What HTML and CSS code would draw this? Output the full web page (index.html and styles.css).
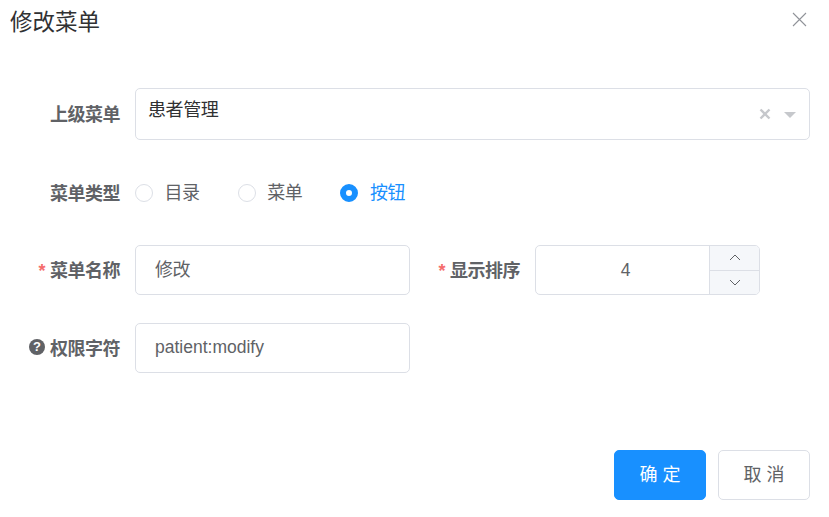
FILE: index.html
```html
<!DOCTYPE html>
<html lang="zh-CN">
<head>
<meta charset="utf-8">
<title>修改菜单</title>
<link rel="stylesheet" href="styles.css">
</head>
<body>
<div class="dialog">
  <header class="head">
    <h2 class="title">修改菜单</h2>
    <svg class="close" width="15" height="15" viewBox="0 0 15 15"><path d="M1 1L14 14M14 1L1 14" stroke="#909399" stroke-width="1.1" fill="none"/></svg>
  </header>
  <form class="form">
    <div class="row row-select">
      <label class="label">上级菜单</label>
      <div class="select">
        <span class="select-value">患者管理</span>
        <svg class="clear" width="12" height="12" viewBox="0 0 12 12"><path d="M1.5 1.5L10.5 10.5M10.5 1.5L1.5 10.5" stroke="#c6c8cc" stroke-width="2.4" fill="none"/></svg>
        <svg class="caret" width="12" height="6" viewBox="0 0 12 6"><path d="M0 0H12L6 6Z" fill="#c6c8cc"/></svg>
      </div>
    </div>
    <div class="row row-radio">
      <label class="label">菜单类型</label>
      <div class="radios">
        <span class="radio"><i class="dot"></i>目录</span>
        <span class="radio"><i class="dot"></i>菜单</span>
        <span class="radio on"><i class="dot"></i>按钮</span>
      </div>
    </div>
    <div class="row row-pair">
      <div class="field">
        <label class="label"><em class="req">*</em>菜单名称</label>
        <div class="input input-cjk">修改</div>
      </div>
      <div class="field field-num">
        <label class="label"><em class="req">*</em>显示排序</label>
        <div class="number">
          <span class="num-value">4</span>
          <div class="steppers">
            <span class="step"><svg width="12" height="7" viewBox="0 0 12 7"><path d="M1 6L6 1L11 6" stroke="#606266" stroke-width="1" fill="none"/></svg></span>
            <span class="step"><svg width="12" height="7" viewBox="0 0 12 7"><path d="M1 1L6 6L11 1" stroke="#606266" stroke-width="1" fill="none"/></svg></span>
          </div>
        </div>
      </div>
    </div>
    <div class="row row-perm">
      <label class="label"><span class="help">?</span>权限字符</label>
      <div class="input">patient:modify</div>
    </div>
  </form>
  <footer class="foot">
    <button type="button" class="btn primary">确 定</button>
    <button type="button" class="btn">取 消</button>
  </footer>
</div>
</body>
</html>
```
FILE: styles.css
```css
* { box-sizing: border-box; }
html, body { margin: 0; padding: 0; background: #fff; }
body {
  width: 829px;
  height: 517px;
  overflow: hidden;
  font-family: "Liberation Sans", "Noto Sans CJK SC", sans-serif;
  font-size: 17.5px;
  color: #606266;
}
.dialog { display: flex; flex-direction: column; height: 517px; }
.head {
  display: flex;
  justify-content: space-between;
  align-items: flex-start;
  height: 88px;
  padding: 8px 22px 0 10px;
}
.title { margin: 0; font-size: 22.5px; font-weight: 400; line-height: 30px; color: #303133; }
.close { margin-top: 4px; }
.form { display: flex; flex-direction: column; padding-right: 19px; }
.row { display: flex; }
.row-select { height: 52px; align-items: center; }
.row-radio { height: 50px; margin-top: 28px; margin-bottom: 27px; align-items: center; }
.row-pair { display: grid; grid-template-columns: 410px 350px; height: 50px; }
.row-perm { height: 50px; margin-top: 28px; }
.field { display: flex; }
.label {
  flex: none;
  display: flex;
  align-items: center;
  justify-content: flex-end;
  width: 120px;
  margin-right: 15px;
  padding-bottom: 3px;
  font-size: 18px;
  letter-spacing: -0.5px;
  font-weight: 700;
  color: #606266;
  white-space: nowrap;
}
.row-radio .label { height: 50px; padding-bottom: 2px; }
.field-num .label { width: 110px; }
.req { margin: 5px 5px 0 0; font-style: normal; font-weight: 700; color: #f56c6c; }
.help {
  display: flex;
  align-items: center;
  justify-content: center;
  width: 16px;
  height: 16px;
  margin-right: 5px;
  border-radius: 50%;
  background: #606266;
  color: #fff;
  font-size: 13px;
  font-weight: 700;
  letter-spacing: 0;
  line-height: 1;
}
.select {
  position: relative;
  flex: 1;
  height: 52px;
  padding: 9px 12px;
  border: 1px solid #dcdfe6;
  border-radius: 5px;
}
.select-value { display: block; font-size: 18px; letter-spacing: -0.4px; line-height: 24px; color: #303133; }
.clear { position: absolute; right: 38px; top: 19px; }
.caret { position: absolute; right: 13px; top: 23px; }
.radios { display: flex; gap: 38px; }
.radio { display: flex; align-items: center; gap: 11.5px; font-size: 18px; letter-spacing: -0.4px; line-height: 24px; }
.dot {
  flex: none;
  width: 18px;
  height: 18px;
  border: 1px solid #dcdfe6;
  border-radius: 50%;
  background: #fff;
}
.radio.on { color: #1890ff; }
.radio.on .dot { border: 6px solid #1890ff; }
.input {
  display: flex;
  align-items: center;
  width: 275px;
  height: 50px;
  padding: 0 19px 2px;
  border: 1px solid #dcdfe6;
  border-radius: 5px;
}
.input-cjk { padding-bottom: 4px; font-size: 18px; letter-spacing: -0.4px; }
.number {
  display: flex;
  width: 225px;
  height: 50px;
  border: 1px solid #dcdfe6;
  border-radius: 5px;
  overflow: hidden;
}
.num-value { flex: 1; display: flex; align-items: center; justify-content: center; padding-left: 6px; }
.steppers {
  display: flex;
  flex-direction: column;
  width: 50px;
  border-left: 1px solid #dcdfe6;
  background: #f5f7fa;
}
.step { flex: 1; display: flex; align-items: center; justify-content: center; }
.step + .step { border-top: 1px solid #dcdfe6; }
.foot {
  display: flex;
  justify-content: flex-end;
  gap: 12px;
  margin-top: 77px;
  padding-right: 19px;
}
.btn {
  width: 92px;
  height: 50px;
  padding: 0 0 5px;
  border: 1px solid #dcdfe6;
  border-radius: 5px;
  background: #fff;
  color: #606266;
  font-family: inherit;
  font-size: 18px;
}
.btn.primary { border-color: #1890ff; background: #1890ff; color: #fff; }
```
